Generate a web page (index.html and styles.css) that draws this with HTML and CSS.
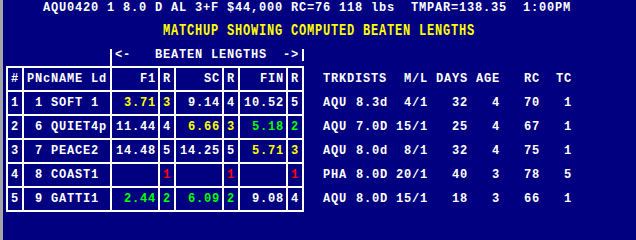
FILE: index.html
```html
<!DOCTYPE html>
<html>
<head>
<meta charset="utf-8">
<link rel="stylesheet" href="styles.css">
</head>
<body>
<div class="screen">
  <div class="status">AQU0420 1 8.0 D AL 3+F $44,000 RC=76 118 lbs  TMPAR=138.35  1:00PM</div>
  <div class="title"><span class="title-text">MATCHUP SHOWING COMPUTED BEATEN LENGTHS</span></div>
  <div class="span-row"><span class="bar bar-l"></span><span class="span-text">&lt;-   BEATEN LENGTHS  -&gt;</span><span class="bar bar-r"></span></div>
  <div class="main">
    <div class="grid">
      <div class="c">#</div><div class="c">PNcNAME Ld</div><div class="c n">F1</div><div class="c">R</div><div class="c n">SC</div><div class="c">R</div><div class="c n">FIN</div><div class="c">R</div>

      <div class="c">1</div><div class="c"> 1 SOFT 1</div><div class="c n yel">3.71</div><div class="c yel">3</div><div class="c n">9.14</div><div class="c">4</div><div class="c n">10.52</div><div class="c">5</div>

      <div class="c">2</div><div class="c"> 6 QUIET4p</div><div class="c n">11.44</div><div class="c">4</div><div class="c n yel">6.66</div><div class="c yel">3</div><div class="c n grn">5.18</div><div class="c grn">2</div>

      <div class="c">3</div><div class="c"> 7 PEACE2</div><div class="c n">14.48</div><div class="c">5</div><div class="c n">14.25</div><div class="c">5</div><div class="c n yel">5.71</div><div class="c yel">3</div>

      <div class="c">4</div><div class="c"> 8 COAST1</div><div class="c n"></div><div class="c red">1</div><div class="c n"></div><div class="c red">1</div><div class="c n"></div><div class="c red">1</div>

      <div class="c">5</div><div class="c"> 9 GATTI1</div><div class="c n grn">2.44</div><div class="c grn">2</div><div class="c n grn">6.09</div><div class="c grn">2</div><div class="c n">9.08</div><div class="c">4</div>
    </div>
    <div class="info">
      <div>TRKDISTS</div><div></div><div class="n">M/L</div><div class="n">DAYS</div><div class="n">AGE</div><div class="n">RC</div><div class="n">TC</div>
      <div>AQU</div><div class="n">8.3d</div><div class="n">4/1</div><div class="n">32</div><div class="n">4</div><div class="n">70</div><div class="n">1</div>
      <div>AQU</div><div class="n">7.0D</div><div class="n">15/1</div><div class="n">25</div><div class="n">4</div><div class="n">67</div><div class="n">1</div>
      <div>AQU</div><div class="n">8.0d</div><div class="n">8/1</div><div class="n">32</div><div class="n">4</div><div class="n">75</div><div class="n">1</div>
      <div>PHA</div><div class="n">8.0D</div><div class="n">20/1</div><div class="n">40</div><div class="n">3</div><div class="n">78</div><div class="n">5</div>
      <div>AQU</div><div class="n">8.0D</div><div class="n">15/1</div><div class="n">18</div><div class="n">3</div><div class="n">66</div><div class="n">1</div>
    </div>
  </div>
</div>
</body>
</html>
```
FILE: styles.css
```css
html, body {
  margin: 0;
  padding: 0;
  background: #000080;
}

.screen {
  width: 633px;
  height: 240px;
  border-left: 3px solid #a4a4a4;
  background: #000080;
  color: #ffffff;
  font-family: "Liberation Mono", "DejaVu Sans Mono", monospace;
  font-weight: bold;
  font-size: 12px;
  letter-spacing: 0.8px;
  overflow: hidden;
}

.status,
.title-text,
.span-text,
.c,
.info > div {
  white-space: pre;
}

.status {
  height: 16px;
  line-height: 16px;
  padding-left: 40px;
}

.title {
  height: 30px;
  line-height: 30px;
  padding-left: 160px;
  color: #ffff00;
}

.title-text {
  display: inline-block;
  transform: scaleY(1.3);
}

.span-row {
  height: 20px;
  box-sizing: border-box;
  padding-top: 3px;
  padding-left: 107px;
  display: flex;
  align-items: flex-start;
}

.bar {
  width: 2px;
  background: #ffffff;
}

.bar-l {
  height: 17px;
}

.bar-r {
  height: 12px;
}

.span-text {
  line-height: 12px;
  margin: 0 3px;
}

.main {
  display: flex;
  align-items: flex-start;
}

.grid {
  margin-left: 3px;
  display: grid;
  grid-template-columns: 14px 86px 46px 14px 46px 14px 46px 14px;
  grid-auto-rows: 22px;
  gap: 2px;
  padding: 2px;
  background: #ffffff;
}

.c {
  background: #000080;
  padding: 0 3px;
  line-height: 22px;
}

.c.n {
  text-align: right;
  padding-right: 2px;
}

.info {
  margin-left: 19px;
  padding-top: 2px;
  display: grid;
  grid-template-columns: 24px 40px 40px 40px 32px 40px 32px;
  grid-auto-rows: 22px;
  row-gap: 2px;
  line-height: 22px;
}

.info .n {
  text-align: right;
  margin-right: -1px;
}

.yel { color: #ffff00; }
.grn { color: #00ff00; }
.red { color: #ff0000; }
```
